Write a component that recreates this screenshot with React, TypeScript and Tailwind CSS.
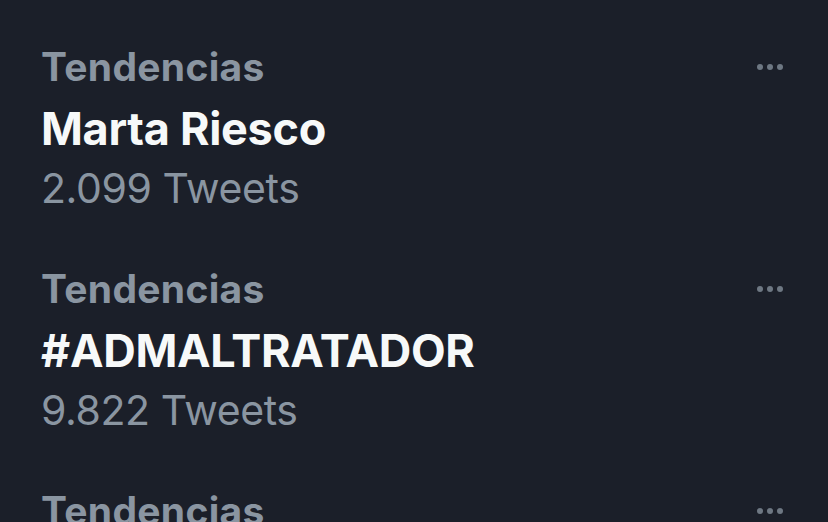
const trends = [
  { label: 'Tendencias', name: 'Marta Riesco', count: '2.099 Tweets' },
  { label: 'Tendencias', name: '#ADMALTRATADOR', count: '9.822 Tweets' },
  { label: 'Tendencias', name: 'Lorem', count: '1.000 Tweets' },
];

const MoreIcon = () => (
  <svg width="28" height="8" viewBox="0 0 28 8" fill="#6e7883">
    <circle cx="4" cy="4" r="3" />
    <circle cx="14" cy="4" r="3" />
    <circle cx="24" cy="4" r="3" />
  </svg>
);

const TrendItem = ({ label, name, count }: { label: string; name: string; count: string }) => {
  return (
    <div className="flex justify-between items-start pl-[41px] pr-[44px] pt-[27px] pb-[24px]">
      <div className="flex flex-col">
        <span className="text-[39px] leading-[48px] font-bold text-[#8a95a1] tracking-[0.3px]">
          {label}
        </span>
        <span className="mt-[7px] text-[45px] leading-[62px] font-bold text-[#f7f9f9] tracking-[-0.3px]">
          {name}
        </span>
        <span className="mt-[2px] text-[41px] leading-[52px] text-[#8a95a1] tracking-[-0.4px]">
          {count}
        </span>
      </div>
      <div className="mt-[20px]">
        <MoreIcon />
      </div>
    </div>
  );
};

export default function App() {
  return (
    <div
      className="w-[828px] h-[522px] overflow-hidden bg-[#1b1f29] pt-[16px]"
      style={{ fontFamily: 'Inter, "Liberation Sans", sans-serif' }}
    >
      {trends.map((t, i) => (
        <TrendItem key={i} {...t} />
      ))}
    </div>
  );
}
